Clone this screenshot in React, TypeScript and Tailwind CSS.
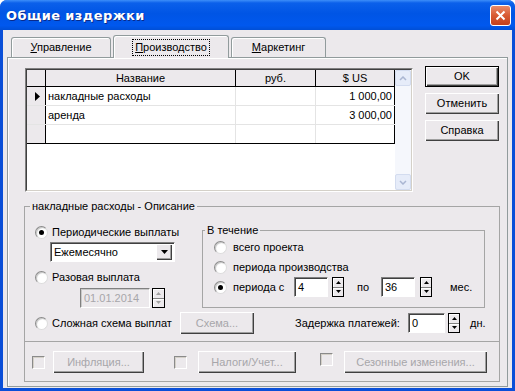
import React from 'react'

interface BtnProps {
  children: React.ReactNode;
  className?: string;
  isDefault?: boolean;
  disabled?: boolean;
}

function Btn({ children, className = "", isDefault, disabled }: BtnProps) {
  return (
    <div className={`flex items-center justify-center bg-[#ece9ec] shadow-[inset_1px_1px_0_#fff,inset_-1px_-1px_0_#404040,inset_-2px_-2px_0_#a0a0a0] ${isDefault ? "border border-black" : ""} ${disabled ? "text-[#a7a6aa]" : "text-black"} ${className}`}>
      {children}
    </div>
  )
}

function Radio({ checked }: { checked?: boolean }) {
  return (
    <span className="w-[13px] h-[13px] shrink-0 rounded-full bg-white border border-t-[#8a8a8a] border-l-[#8a8a8a] border-r-[#dcdcdc] border-b-[#dcdcdc] shadow-[inset_1px_1px_1px_#c4c4c4] flex items-center justify-center">
      {checked && <span className="w-[5px] h-[5px] rounded-full bg-black" />}
    </span>
  )
}

function Check({ className = "" }: { className?: string }) {
  return (
    <span className={`block w-[13px] h-[13px] shrink-0 bg-[#ece9ec] border border-t-[#8a8a8a] border-l-[#8a8a8a] border-r-white border-b-white shadow-[inset_1px_1px_0_#d4d0c8] ${className}`} />
  )
}

function Spin({ disabled, className = "" }: { disabled?: boolean; className?: string }) {
  const c = disabled ? "#a0a0a0" : "#000"
  return (
    <div className={`h-[20px] shrink-0 border border-black flex flex-col bg-[#ece9ec] ${className}`}>
      <div className="flex-1 flex items-center justify-center border-b border-[#808080] shadow-[inset_1px_1px_0_#fff]">
        <svg width="5" height="3" viewBox="0 0 5 3"><path d="M2.5 0L5 3H0Z" fill={c} /></svg>
      </div>
      <div className="flex-1 flex items-center justify-center shadow-[inset_1px_1px_0_#fff]">
        <svg width="5" height="3" viewBox="0 0 5 3"><path d="M0 0H5L2.5 3Z" fill={c} /></svg>
      </div>
    </div>
  )
}

function Field({ children, className = "", disabled }: { children?: React.ReactNode; className?: string; disabled?: boolean }) {
  return (
    <div className={`h-[20px] shrink-0 flex items-center pl-[3px] border border-t-[#808080] border-l-[#808080] border-r-white border-b-white ${disabled ? "bg-[#ece9ec] text-[#a7a6aa] shadow-[inset_1px_1px_0_#c8c8c8]" : "bg-white shadow-[inset_1px_1px_0_#404040]"} ${className}`}>
      {children}
    </div>
  )
}

function Grid() {
  const rows = [
    { name: "накладные расходы", usd: "1 000,00", current: true },
    { name: "аренда", usd: "3 000,00" },
    { name: "", usd: "" },
  ]
  return (
    <div className="ml-[1px] w-[388px] h-[124px] shrink-0 border border-t-[#808080] border-l-[#808080] border-r-white border-b-white">
      <div className="h-full flex bg-white border border-t-[#404040] border-l-[#404040] border-r-[#d4d0c8] border-b-[#d4d0c8]">
        <div className="w-[368px] flex flex-col">
          <div className="h-[17px] flex border-b border-black bg-[#ece9ec]">
            <div className="w-[19px] border-r border-black" />
            <div className="w-[190px] border-r border-black flex items-center justify-center">Название</div>
            <div className="w-[80px] border-r border-black flex items-center justify-center">руб.</div>
            <div className="w-[79px] border-r border-black flex items-center justify-center">$ US</div>
          </div>
          {rows.map((r, i) => (
            <div key={i} className={`h-[19px] flex border-b ${i === rows.length - 1 ? "border-black" : "border-[#e4e4e4]"}`}>
              <div className="w-[19px] border-r border-black bg-[#ece9ec] flex items-center pl-[8px]">
                {r.current && (
                  <svg width="5" height="9" viewBox="0 0 5 9"><path d="M0 0L5 4.5L0 9Z" fill="#000" /></svg>
                )}
              </div>
              <div className="w-[190px] border-r border-[#e4e4e4] flex items-center pl-[2px]">{r.name}</div>
              <div className="w-[80px] border-r border-[#e4e4e4]" />
              <div className="w-[79px] border-r border-black flex items-center justify-end pr-[2px]">{r.usd}</div>
            </div>
          ))}
        </div>
        <div className="w-[16px] ml-auto flex flex-col justify-between bg-[#f5f7fc]">
          <div className="h-[16px] rounded-[2px] border border-[#d3dcef] bg-[#e6ecf9] flex items-center justify-center">
            <svg width="8" height="5" viewBox="0 0 8 5"><path d="M1 4L4 1L7 4" stroke="#aab6d2" strokeWidth="1.5" fill="none" /></svg>
          </div>
          <div className="h-[16px] rounded-[2px] border border-[#d3dcef] bg-[#e6ecf9] flex items-center justify-center">
            <svg width="8" height="5" viewBox="0 0 8 5"><path d="M1 1L4 4L7 1" stroke="#aab6d2" strokeWidth="1.5" fill="none" /></svg>
          </div>
        </div>
      </div>
    </div>
  )
}

export default function App() {
  return (
    <div className="w-[515px] h-[391px] flex flex-col bg-[#0a4fd8] rounded-t-[7px] overflow-hidden font-['Liberation_Sans',Arial,sans-serif] text-[11px] leading-[13px] text-black">
      <div className="h-[30px] shrink-0 flex items-center pl-[6px] pr-[4px] bg-[linear-gradient(180deg,#3d8ef9_0%,#0b60ea_10%,#0055e5_45%,#0058ee_85%,#004fd6_100%)]">
        <span className="font-['DejaVu_Sans',sans-serif] font-bold text-[13px] tracking-[0.4px] text-white [text-shadow:1px_1px_0_#0a2a8a]">Общие издержки</span>
        <div className="ml-auto w-[21px] h-[21px] rounded-[3px] border border-white bg-[linear-gradient(180deg,#e98a6a_0%,#d85a32_50%,#c4401c_100%)] flex items-center justify-center">
          <svg width="11" height="11" viewBox="0 0 11 11"><path d="M1.5 1.5L9.5 9.5M9.5 1.5L1.5 9.5" stroke="#fff" strokeWidth="2" /></svg>
        </div>
      </div>

      <div className="flex-1 mx-[3px] mb-[3px] bg-[#ece9ec] flex flex-col">
        <div className="pt-[5px] pl-[8px] flex items-end">
          <div className="w-[100px] h-[20px] rounded-t-[3px] border border-b-0 border-[#919b9c] shadow-[inset_1px_1px_0_#fff] flex items-center justify-center">
            <span><span className="underline">У</span>правление</span>
          </div>
          <div className="relative z-10 ml-[2px] -mb-px w-[116px] h-[23px] rounded-t-[3px] border border-b-0 border-[#919b9c] bg-[#ece9ec] shadow-[inset_1px_1px_0_#fff] flex items-center justify-center">
            <span className="border border-dotted border-black px-[2px] py-[1px]"><span className="underline">П</span>роизводство</span>
          </div>
          <div className="ml-[2px] w-[95px] h-[20px] rounded-t-[3px] border border-b-0 border-[#919b9c] shadow-[inset_1px_1px_0_#fff] flex items-center justify-center">
            <span><span className="underline">М</span>аркетинг</span>
          </div>
        </div>

        <div className="flex-1 mx-[4px] mb-[1px] border border-[#919b9c] shadow-[inset_1px_1px_0_#fff] pt-[10px] pl-[16px] pr-[7px] flex flex-col">
          <div className="flex">
            <Grid />
            <div className="ml-[12px] -mt-[2px] flex flex-col gap-[6px]">
              <Btn isDefault className="w-[74px] h-[21px]">OK</Btn>
              <Btn className="w-[74px] h-[21px]">Отменить</Btn>
              <Btn className="w-[74px] h-[21px]">Справка</Btn>
            </div>
          </div>

          <fieldset className="mt-[8px] border border-[#a5a5a5]">
            <legend className="ml-[5px] px-[2px] leading-[13px]">накладные расходы - Описание</legend>

            <div className="mt-[11px] flex">
              <div className="w-[177px] pl-[10px] flex flex-col">
                <div className="h-[16px] flex items-center gap-[4px]">
                  <Radio checked />
                  <span>Периодические выплаты</span>
                </div>
                <div className="mt-[2px] ml-[15px] w-[125px] h-[20px] flex items-center justify-between pl-[3px] pr-[2px] bg-white border border-t-[#808080] border-l-[#808080] border-r-white border-b-white shadow-[inset_1px_1px_0_#404040]">
                  <span>Ежемесячно</span>
                  <Btn className="w-[16px] h-[16px]">
                    <svg width="7" height="4" viewBox="0 0 7 4"><path d="M0 0H7L3.5 4Z" fill="#000" /></svg>
                  </Btn>
                </div>
                <div className="mt-[7px] h-[16px] flex items-center gap-[4px]">
                  <Radio />
                  <span>Разовая выплата</span>
                </div>
                <div className="mt-[3px] ml-[45px] flex items-center gap-[2px]">
                  <Field disabled className="w-[70px] border-[#a0a0a0]">01.01.2014</Field>
                  <Spin disabled className="w-[13px]" />
                </div>
              </div>

              <fieldset className="w-[283px] border border-[#a5a5a5] pb-[2px]">
                <legend className="ml-[2px] px-[2px] leading-[13px]">В течение</legend>
                <div className="pl-[11px] flex flex-col">
                  <div className="h-[20px] flex items-center gap-[6px]">
                    <Radio />
                    <span>всего проекта</span>
                  </div>
                  <div className="h-[20px] flex items-center gap-[6px]">
                    <Radio />
                    <span>периода производства</span>
                  </div>
                  <div className="h-[20px] flex items-center">
                    <Radio checked />
                    <span className="ml-[6px] w-[61px]">периода с</span>
                    <Field className="w-[34px]">4</Field>
                    <Spin className="ml-[4px] w-[12px]" />
                    <span className="ml-[13px] w-[24px]">по</span>
                    <Field className="w-[34px]">36</Field>
                    <Spin className="ml-[5px] w-[12px]" />
                    <span className="ml-[18px]">мес.</span>
                  </div>
                </div>
              </fieldset>
            </div>

            <div className="mt-[4px] h-[22px] pl-[10px] flex items-center">
              <div className="w-[145px] flex items-center gap-[4px]">
                <Radio />
                <span>Сложная схема выплат</span>
              </div>
              <Btn disabled className="w-[74px] h-[22px]">Схема...</Btn>
              <span className="ml-[41px] w-[113px]">Задержка платежей:</span>
              <Field className="w-[37px]">0</Field>
              <Spin className="ml-[3px] w-[12px]" />
              <span className="ml-[10px]">дн.</span>
            </div>

            <div className="mt-[7px] border-t border-[#a5a5a5] pt-[9px] pb-[8px] pl-[7px] flex items-center">
              <Check />
              <Btn disabled className="ml-[8px] w-[91px] h-[22px]">Инфляция...</Btn>
              <Check className="ml-[30px]" />
              <Btn disabled className="ml-[11px] w-[98px] h-[22px]">Налоги/Учет...</Btn>
              <Check className="ml-[24px] self-start mt-[2px]" />
              <Btn disabled className="ml-[11px] w-[143px] h-[22px]">Сезонные изменения...</Btn>
            </div>
          </fieldset>
        </div>
      </div>
    </div>
  )
}
